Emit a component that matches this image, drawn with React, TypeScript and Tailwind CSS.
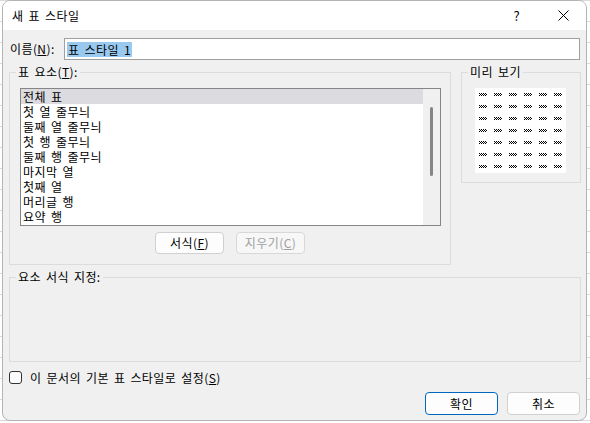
import React from 'react';

const FONT = "font-['Malgun_Gothic','Noto_Sans_CJK_KR',sans-serif]";

const items = [
  '전체 표',
  '첫 열 줄무늬',
  '둘째 열 줄무늬',
  '첫 행 줄무늬',
  '둘째 행 줄무늬',
  '마지막 열',
  '첫째 열',
  '머리글 행',
  '요약 행',
];

function Mark({ x, y }: { x: number; y: number }) {
  const cells: React.ReactNode[] = [];
  for (let r = 0; r < 3; r++) {
    for (let c = 0; c < 8; c++) {
      if ((r + c) % 2 === 0) cells.push(<rect key={`${r}-${c}`} x={x + c} y={y + r} width={1} height={1} />);
    }
  }
  return <g>{cells}</g>;
}

function Preview() {
  const marks: React.ReactNode[] = [];
  for (let r = 0; r < 7; r++) {
    for (let c = 0; c < 6; c++) {
      marks.push(<Mark key={`${r}-${c}`} x={4 + c * 15} y={5 + r * 12} />);
    }
  }
  return (
    <svg width="91" height="85" viewBox="0 0 91 85" shapeRendering="crispEdges" className="block bg-white">
      <g fill="#000">{marks}</g>
    </svg>
  );
}

function Group({ label, className, children }: { label: React.ReactNode; className: string; children?: React.ReactNode }) {
  return (
    <div className={`relative border border-[#dcdcdc] ${className}`}>
      <span className="absolute -top-[9px] left-[6px] bg-[#f0f0f0] px-[2px] leading-[16px] whitespace-nowrap">{label}</span>
      {children}
    </div>
  );
}

export default function App() {
  return (
    <div className={`w-[590px] h-[423px] overflow-hidden bg-white bg-[linear-gradient(#d9d9d9_1px,transparent_1px)] bg-[size:100%_21px] text-[12px] text-black tracking-[0.4px] [word-spacing:2px] ${FONT}`}>
      <div className="ml-[2px] w-[585px] h-[421px] rounded-[8px] border border-[#b4b4b4] overflow-hidden flex flex-col bg-[#f0f0f0]">
        {/* title bar */}
        <div className="h-[29px] bg-white flex items-center pl-[9px] shrink-0">
          <span className="leading-[16px]">새 표 스타일</span>
          <span className="ml-auto mr-[38px] text-[13px] leading-[16px]">?</span>
          <svg width="11" height="11" viewBox="0 0 11 11" className="mr-[17px]">
            <path d="M0.5 0.5 L10.5 10.5 M10.5 0.5 L0.5 10.5" stroke="#000" strokeWidth="1" fill="none" />
          </svg>
        </div>

        <div className="flex flex-col pl-[6px]">
          {/* name row */}
          <div className="mt-[8px] h-[22px] flex items-center">
            <span className="w-[55px] pl-px leading-[16px] whitespace-nowrap">
              이름(<span className="underline">N</span>):
            </span>
            <div className="w-[516px] h-[22px] border border-[#a0a0a0] bg-white flex items-center pl-[2px]">
              <span className="bg-[#99c9ef] px-px leading-[15px]">표 스타일 1</span>
            </div>
          </div>

          {/* groups */}
          <div className="mt-[12px] flex items-start gap-[10px]">
            <Group
              className="w-[442px] h-[193px]"
              label={<>표 요소(<span className="underline">T</span>):</>}
            >
              <div className="ml-[10px] mt-[15px] w-[421px] h-[138px] border border-[#858585] bg-white flex">
                <div className="flex-1 flex flex-col">
                  {items.map((it, i) => (
                    <div
                      key={it}
                      className={`h-[15px] pl-[2px] leading-[15px] whitespace-nowrap ${i === 0 ? 'bg-[#dcdce0]' : ''}`}
                    >
                      {it}
                    </div>
                  ))}
                </div>
                <div className="w-[17px] bg-[#f0f0f0] pt-[18px]">
                  <div className="ml-[7px] w-[3px] h-[69px] bg-[#858585] rounded-full" />
                </div>
              </div>
              <div className="mt-[6px] flex justify-center gap-[12px]">
                <div className="w-[69px] h-[22px] rounded-[4px] border border-[#d0d0d0] bg-[#fdfdfd] flex items-center justify-center leading-[16px]">
                  서식(<span className="underline">F</span>)
                </div>
                <div className="w-[69px] h-[22px] rounded-[4px] border border-[#d8d8d8] bg-[#f7f7f7] text-[#a0a0a0] flex items-center justify-center leading-[16px]">
                  지우기(<span className="underline">C</span>)
                </div>
              </div>
            </Group>

            <Group className="w-[120px] h-[111px]" label="미리 보기">
              <div className="ml-[13px] mt-[15px]">
                <Preview />
              </div>
            </Group>
          </div>

          <Group className="mt-[12px] w-[572px] h-[85px]" label="요소 서식 지정:" />

          {/* checkbox */}
          <div className="mt-[9px] h-[13px] flex items-center">
            <div className="w-[13px] h-[13px] rounded-[3px] border border-[#333] bg-[#fbfbfb]" />
            <span className="ml-[8px] leading-[16px]">
              이 문서의 기본 표 스타일로 설정(<span className="underline">S</span>)
            </span>
          </div>

          {/* buttons */}
          <div className="mt-[8px] flex justify-end gap-[9px] pr-[6px]">
            <div className="w-[73px] h-[23px] rounded-[4px] border border-[#0067c0] bg-[#fdfdfd] flex items-center justify-center leading-[16px]">
              확인
            </div>
            <div className="w-[73px] h-[23px] rounded-[4px] border border-[#d0d0d0] bg-[#fdfdfd] flex items-center justify-center leading-[16px]">
              취소
            </div>
          </div>
        </div>
      </div>
    </div>
  );
}
